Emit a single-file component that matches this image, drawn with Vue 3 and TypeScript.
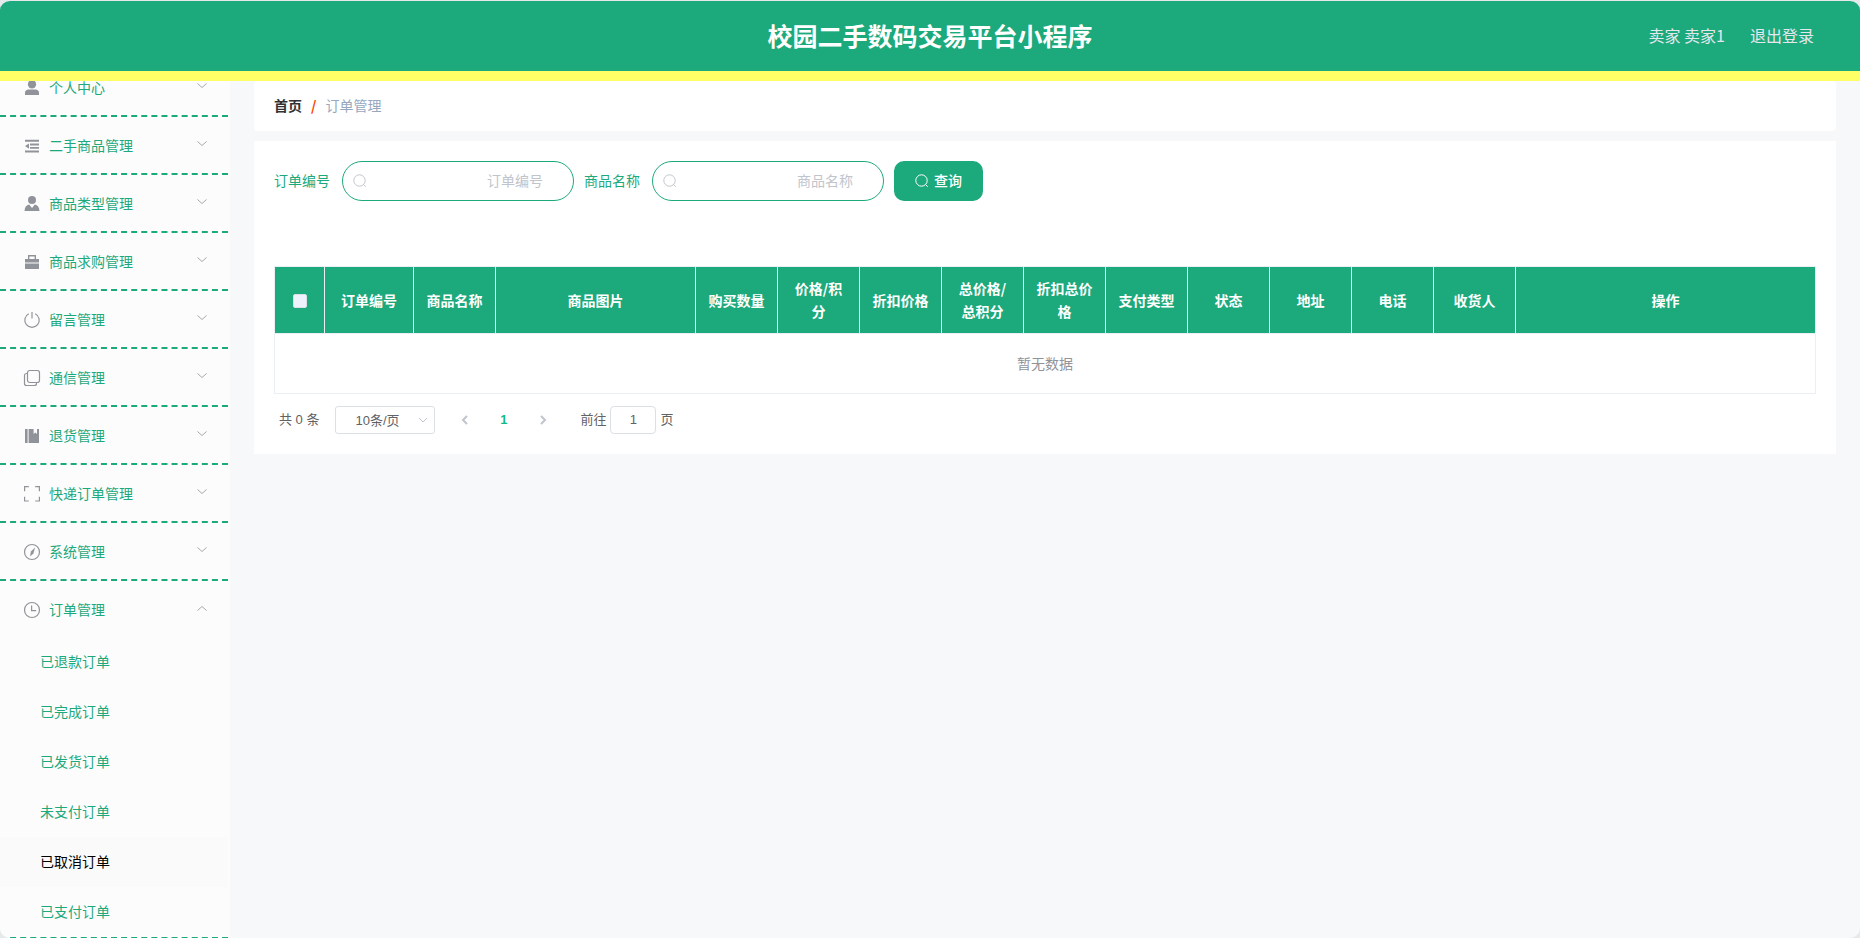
<script setup lang="ts">
import { ref } from 'vue'

interface MenuItem {
  label: string
  icon: string
}

const menu: MenuItem[] = [
  { label: '个人中心', icon: 'user' },
  { label: '二手商品管理', icon: 'fold' },
  { label: '商品类型管理', icon: 'custom' },
  { label: '商品求购管理', icon: 'case' },
  { label: '留言管理', icon: 'power' },
  { label: '通信管理', icon: 'copy' },
  { label: '退货管理', icon: 'book' },
  { label: '快递订单管理', icon: 'full' },
  { label: '系统管理', icon: 'compass' },
  { label: '订单管理', icon: 'clock' },
]

const openMenu = ref('订单管理')
const orderPages: string[] = ['已退款订单', '已完成订单', '已发货订单', '未支付订单', '已取消订单', '已支付订单']
const activePage = ref('已取消订单')

interface Column {
  label: string
  size: string
}

const columns: Column[] = [
  { label: '订单编号', size: 'col-id' },
  { label: '商品名称', size: 'col-auto' },
  { label: '商品图片', size: 'col-image' },
  { label: '购买数量', size: 'col-auto' },
  { label: '价格/积分', size: 'col-auto' },
  { label: '折扣价格', size: 'col-auto' },
  { label: '总价格/总积分', size: 'col-auto' },
  { label: '折扣总价格', size: 'col-auto' },
  { label: '支付类型', size: 'col-auto' },
  { label: '状态', size: 'col-auto' },
  { label: '地址', size: 'col-auto' },
  { label: '电话', size: 'col-auto' },
  { label: '收货人', size: 'col-auto' },
  { label: '操作', size: 'col-actions' },
]

const orderNo = ref('')
const goodsName = ref('')
const pageSize = ref('10')
const jumpPage = ref('1')

function toggle(label: string): void {
  openMenu.value = openMenu.value === label ? '' : label
}
</script>

<template>
  <div class="app">
    <header class="header">
      <span></span>
      <h1 class="title">校园二手数码交易平台小程序</h1>
      <div class="account">
        <span>卖家 卖家1</span>
        <button type="button" class="logout">退出登录</button>
      </div>
    </header>

    <div class="body">
      <nav class="sidebar">
        <ul class="menu">
          <li v-for="item in menu" :key="item.label" class="menu-group">
            <button type="button" class="menu-title" @click="toggle(item.label)">
              <svg class="menu-icon" viewBox="0 0 18 18" aria-hidden="true">
                <g v-if="item.icon === 'user'" class="solid">
                  <ellipse cx="9" cy="5.2" rx="4.1" ry="4.4" />
                  <path d="M2 16v-2c0-2.2 1.3-3.4 3.6-3.4h6.8c2.3 0 3.6 1.2 3.6 3.4v2z" />
                </g>
                <g v-else-if="item.icon === 'fold'" class="solid">
                  <path d="M2 2.8h14v2H2zM7 6.6h9v1.8H7zM7 10h9v1.8H7zM2 13.4h14v2H2zM2 9.1l4-2.7v5.4z" />
                </g>
                <g v-else-if="item.icon === 'custom'" class="solid">
                  <circle cx="9" cy="5" r="4" />
                  <path d="M1.5 16c.2-3.6 1.8-5.8 4.7-6.4L9 13l2.8-3.4c2.9.6 4.5 2.8 4.7 6.4z" />
                </g>
                <g v-else-if="item.icon === 'case'" class="solid">
                  <path fill-rule="evenodd" d="M5 6V2h8v4h3v3.5H2V6zm1.4 0h5.2V3.4H6.4z" />
                  <path d="M2 10.5h14V16H2z" />
                </g>
                <g v-else-if="item.icon === 'power'" class="line">
                  <path d="M5.8 2.7a7.2 7.2 0 1 0 6.4 0M9 1v6.5" />
                </g>
                <g v-else-if="item.icon === 'copy'" class="line">
                  <rect x="4.5" y="1.5" width="12" height="12" rx="2.2" />
                  <path d="M4.2 4.5H3.5a2 2 0 0 0-2 2v8a2 2 0 0 0 2 2h8a2 2 0 0 0 2-2v-.8" />
                </g>
                <g v-else-if="item.icon === 'book'" class="solid">
                  <path d="M2 2h2.6v14H2zM5.6 2h5v5l1.7-1.4L14 7V2h2v14H5.6z" />
                </g>
                <g v-else-if="item.icon === 'full'" class="line">
                  <path d="M1.6 6.2V1.6h4.2M12.2 1.6h4.2v4.6M16.4 11.8v4.2h-4.2M5.8 16H1.6v-4.2" />
                </g>
                <g v-else-if="item.icon === 'compass'" class="line">
                  <circle cx="9" cy="9" r="7.5" />
                  <path class="solid" d="M12.1 4.6 10.4 10.6l-3.3 2.8.8-5z" />
                </g>
                <g v-else class="line">
                  <circle cx="9" cy="9" r="7.5" />
                  <path d="M8.6 4.5v5.1h4.6" />
                </g>
              </svg>
              <span class="menu-label">{{ item.label }}</span>
              <svg class="menu-arrow" viewBox="0 0 12 12" aria-hidden="true">
                <path v-if="openMenu === item.label" d="m1.5 7.5 4.5-4 4.5 4" />
                <path v-else d="m1.5 2.5 4.5 4 4.5-4" />
              </svg>
            </button>
            <ul v-if="item.label === '订单管理' && openMenu === item.label" class="submenu">
              <li v-for="page in orderPages" :key="page">
                <a
                  href="#"
                  class="submenu-link"
                  :class="{ active: page === activePage }"
                  @click.prevent="activePage = page"
                >{{ page }}</a>
              </li>
            </ul>
          </li>
        </ul>
      </nav>

      <main class="main">
        <div class="breadcrumb">
          <a href="#" class="home">首页</a>
          <span class="slash">/</span>
          <span class="current">订单管理</span>
        </div>

        <section class="panel">
          <form class="search" @submit.prevent>
            <div class="field">
              <label for="order-no">订单编号</label>
              <div class="input-box">
                <svg class="search-icon" viewBox="0 0 14 14" aria-hidden="true">
                  <circle cx="6.5" cy="6.5" r="5.7" />
                  <path d="m10.4 10.4 2.4 2.4" />
                </svg>
                <input id="order-no" v-model="orderNo" type="text" placeholder="订单编号" />
              </div>
            </div>
            <div class="field">
              <label for="goods-name">商品名称</label>
              <div class="input-box">
                <svg class="search-icon" viewBox="0 0 14 14" aria-hidden="true">
                  <circle cx="6.5" cy="6.5" r="5.7" />
                  <path d="m10.4 10.4 2.4 2.4" />
                </svg>
                <input id="goods-name" v-model="goodsName" type="text" placeholder="商品名称" />
              </div>
            </div>
            <button type="submit" class="query">
              <svg class="search-icon" viewBox="0 0 14 14" aria-hidden="true">
                <circle cx="6.5" cy="6.5" r="5.7" />
                <path d="m10.4 10.4 2.4 2.4" />
              </svg>
              <span>查询</span>
            </button>
          </form>

          <table class="orders">
            <thead>
              <tr>
                <th class="col-check"><input type="checkbox" aria-label="全选" /></th>
                <th v-for="col in columns" :key="col.label" :class="col.size">{{ col.label }}</th>
              </tr>
            </thead>
            <tbody>
              <tr>
                <td :colspan="columns.length + 1">暂无数据</td>
              </tr>
            </tbody>
          </table>

          <div class="pagination">
            <span class="total">共 0 条</span>
            <div class="size-box">
              <select v-model="pageSize" aria-label="每页条数">
                <option value="10">10条/页</option>
                <option value="20">20条/页</option>
                <option value="50">50条/页</option>
              </select>
              <svg class="size-arrow" viewBox="0 0 12 12" aria-hidden="true">
                <path d="m2 4 4 4 4-4" />
              </svg>
            </div>
            <button type="button" class="page-button" aria-label="上一页" disabled>
              <svg viewBox="0 0 12 12" aria-hidden="true"><path d="M8 2 4 6l4 4" /></svg>
            </button>
            <button type="button" class="page-button page-current">1</button>
            <button type="button" class="page-button" aria-label="下一页" disabled>
              <svg viewBox="0 0 12 12" aria-hidden="true"><path d="m4 2 4 4-4 4" /></svg>
            </button>
            <label class="jump">
              <span>前往</span>
              <input v-model="jumpPage" type="text" />
              <span>页</span>
            </label>
          </div>
        </section>
      </main>
    </div>
  </div>
</template>

<style>
body {
  background: #e6e9eb;
}
</style>

<style scoped>
* {
  box-sizing: border-box;
}

.app {
  display: flex;
  flex-direction: column;
  height: 100vh;
  overflow: hidden;
  border-top: 1px solid #e6e9eb;
  border-radius: 10px;
  background: #f7f8fa;
  color: #606266;
  font-family: "Noto Sans CJK SC", sans-serif;
  font-size: 14px;
}

button,
input,
select {
  font: inherit;
}

ul {
  margin: 0;
  padding: 0;
  list-style: none;
}

.header {
  position: relative;
  z-index: 1;
  flex: none;
  display: grid;
  grid-template-columns: 1fr auto 1fr;
  align-items: center;
  height: 80px;
  padding: 0 46px 2px;
  border-bottom: 10px solid #ffff66;
  background: #1ca97c;
}

.title {
  margin: 0;
  color: #fff;
  font-size: 25px;
  font-weight: 700;
  line-height: 36px;
}

.account {
  display: flex;
  justify-content: flex-end;
  gap: 25px;
  color: #e4e7ed;
  font-size: 16px;
  line-height: 24px;
}

.logout {
  padding: 0;
  border: 0;
  background: none;
  color: inherit;
  cursor: pointer;
}

.body {
  flex: 1;
  display: flex;
  min-height: 0;
}

.sidebar {
  flex: none;
  width: 230px;
  padding-right: 2px;
  background: #fcfcfc;
}

/* The menu is scrolled so that its last entry meets the window's bottom. */
.menu {
  margin-top: -22px;
}

.menu-group {
  border-bottom: 2px dashed #1ca97c;
}

.menu-title {
  display: flex;
  align-items: center;
  width: 100%;
  height: 56px;
  padding: 0 20px 0 23px;
  border: 0;
  background: none;
  color: #1ca97c;
  text-align: left;
  cursor: pointer;
}

.menu-icon {
  width: 18px;
  height: 18px;
  margin: 2px 8px 0 0;
}

.solid {
  fill: #909399;
}

.line {
  fill: none;
  stroke: #909399;
  stroke-width: 1.2;
}

.line .solid {
  fill: #909399;
  stroke: none;
}

.menu-label {
  flex: 1;
}

.menu-arrow {
  width: 12px;
  height: 12px;
  fill: none;
  stroke: #a6a9ad;
}

.submenu-link {
  display: block;
  padding: 0 0 2px 40px;
  color: #1ca97c;
  line-height: 48px;
  text-decoration: none;
}

.submenu-link.active {
  background: #fafafa;
  color: #000;
}

.main {
  flex: 1;
  min-width: 0;
  padding: 0 24px;
}

.breadcrumb {
  display: flex;
  align-items: center;
  height: 50px;
  margin-bottom: 10px;
  padding: 0 20px 2px;
  border-radius: 4px;
  background: #fff;
}

.home {
  color: #303133;
  font-weight: 700;
  text-decoration: none;
}

.slash {
  margin: 0 9px;
  color: #ff4500;
  font-weight: 700;
}

.current {
  color: #97a8be;
}

.panel {
  padding: 20px;
  background: #fff;
}

.search {
  display: flex;
  flex-wrap: wrap;
  gap: 10px;
  margin-bottom: 65px;
}

.field {
  display: flex;
  align-items: center;
  gap: 12px;
  color: #1ca97c;
}

.field label,
.input-box input,
.query span {
  padding: 0 0 2px;
}

.input-box {
  display: flex;
  align-items: center;
  width: 232px;
  height: 40px;
  padding: 0 30px 0 10px;
  border: 1px solid #1ca97c;
  border-radius: 20px;
  color: #c0c4cc;
}

.input-box input {
  flex: 1;
  min-width: 0;
  border: 0;
  outline: 0;
  background: none;
  color: #606266;
  text-align: right;
}

.input-box input::placeholder {
  color: #c0c4cc;
}

.search-icon {
  flex: none;
  width: 14px;
  height: 14px;
  fill: none;
  stroke: currentColor;
}

.query {
  display: flex;
  align-items: center;
  gap: 5px;
  height: 40px;
  padding: 0 21px;
  border: 0;
  border-radius: 10px;
  background: #1ca97c;
  color: #fff;
  font-weight: 500;
  cursor: pointer;
}

.orders {
  width: 100%;
  border: 1px solid #ebeef5;
  border-width: 1px 0 0 1px;
  border-spacing: 0;
  table-layout: fixed;
  text-align: center;
}

.orders th,
.orders td {
  padding: 10px;
  border: 1px solid #ebeef5;
  border-width: 0 1px 1px 0;
  line-height: 23px;
}

.orders th {
  background: #1ca97c;
  color: #fff;
  font-weight: 700;
}

.orders td {
  height: 60px;
  color: #909399;
}

.col-check {
  width: 50px;
}

.col-id {
  width: 89px;
}

.col-image {
  width: 200px;
}

.col-actions {
  width: 300px;
}

.orders input {
  display: block;
  width: 14px;
  height: 14px;
  margin: 1px auto 0;
  border: 1px solid #dcdfe6;
  border-radius: 2px;
  background: #edf2fc;
  appearance: none;
}

.orders input:checked {
  background: #303133;
}

.pagination {
  display: flex;
  align-items: center;
  margin-top: 12px;
  padding: 0 5px;
  font-family: "Liberation Sans", "Noto Sans CJK SC", sans-serif;
  font-size: 13px;
  line-height: 28px;
}

.total {
  margin-right: 16px;
}

.size-box {
  display: grid;
  align-items: center;
  width: 100px;
  margin-right: 10px;
}

.size-box select {
  grid-area: 1 / 1;
  height: 28px;
  padding: 0 25px 0 19px;
  border: 1px solid #dcdfe6;
  border-radius: 3px;
  background: #fff;
  color: #606266;
  appearance: none;
}

.size-arrow {
  grid-area: 1 / 1;
  justify-self: end;
  width: 12px;
  height: 12px;
  margin-right: 6px;
  fill: none;
  stroke: #c0c4cc;
  pointer-events: none;
}

.page-button {
  display: flex;
  align-items: center;
  justify-content: center;
  width: 39px;
  height: 28px;
  padding: 0;
  border: 0;
  background: none;
}

.page-button svg {
  width: 12px;
  height: 12px;
  fill: none;
  stroke: #c0c4cc;
  stroke-width: 2;
}

.page-current {
  color: #11b989;
  font-weight: 700;
}

.jump {
  display: flex;
  align-items: center;
  gap: 4px;
  margin-left: 18px;
}

.jump input {
  width: 46px;
  height: 28px;
  padding: 0;
  border: 1px solid #dcdfe6;
  border-radius: 4px;
  background: #fff;
  color: #606266;
  text-align: center;
}
</style>
